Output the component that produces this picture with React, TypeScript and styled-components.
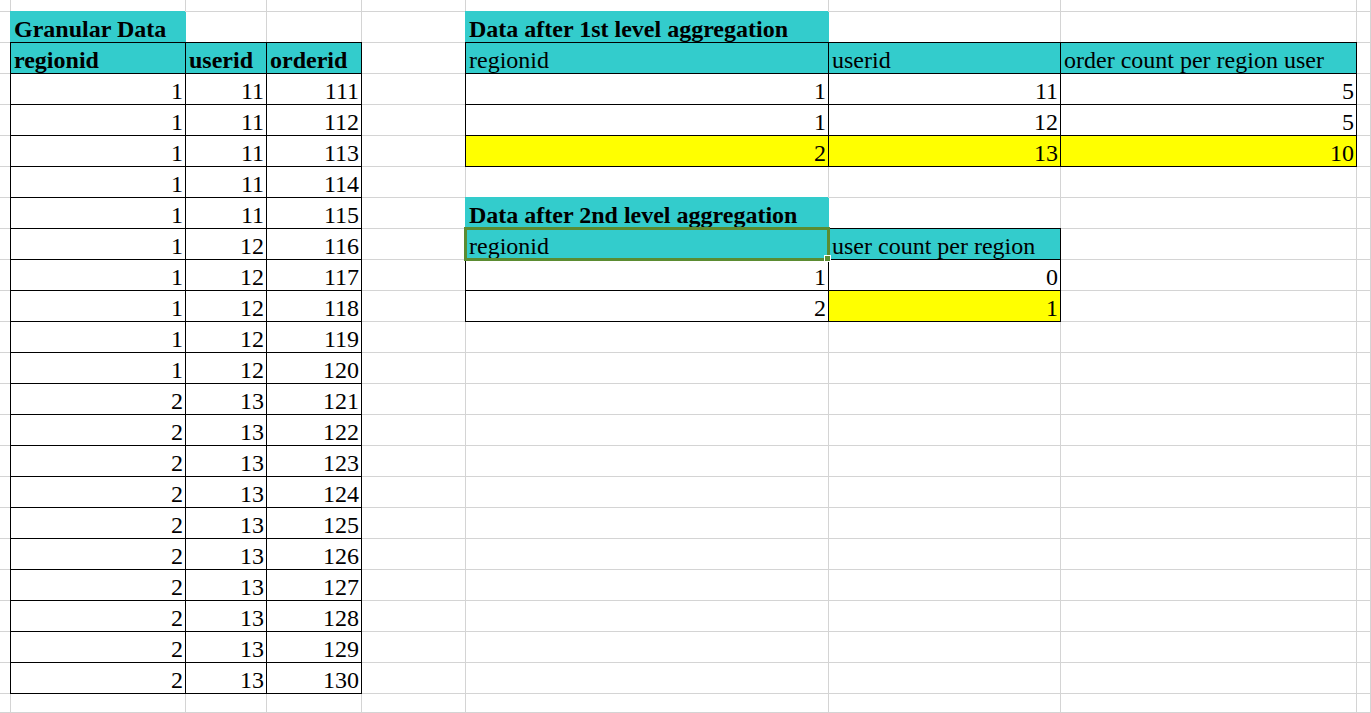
import React from "react";
import styled, { createGlobalStyle, css } from "styled-components";

const GlobalStyle = createGlobalStyle`
  html, body { margin: 0; padding: 0; background: #ffffff; }
  body { font-family: "Liberation Serif", "Times New Roman", serif; overflow: hidden; }
`;

const GRID = "#d4d4d4";
const CYAN = "#33cccc";
const YELLOW = "#ffff00";
const SELECT = "#5b8c32";

const colWidths = [11, 175, 81, 95, 104, 363, 232, 296, 14];
const rowHeights = [12, ...Array(22).fill(31), 19];

const Sheet = styled.div`
  display: grid;
  grid-template-columns: ${colWidths.map((w) => `${w}px`).join(" ")};
  grid-template-rows: ${rowHeights.map((h) => `${h}px`).join(" ")};
  width: 1371px;
  height: 713px;
  overflow: hidden;
`;

type Fill = "cyan" | "yellow" | undefined;

const Cell = styled.div<{ $fill?: Fill; $boxed?: boolean; $bold?: boolean; $num?: boolean; $selected?: boolean }>`
  box-sizing: border-box;
  position: relative;
  display: flex;
  align-items: flex-end;
  justify-content: ${(p) => (p.$num ? "flex-end" : "flex-start")};
  padding: 0 ${(p) => (p.$num ? "2px" : "3px")} 0 3px;
  border-right: 1px solid ${GRID};
  border-bottom: 1px solid ${GRID};
  font-size: 24px;
  line-height: 26px;
  font-weight: ${(p) => (p.$bold ? 700 : 400)};
  color: #000;
  white-space: nowrap;
  ${(p) =>
    p.$fill &&
    css`
      background: ${p.$fill === "cyan" ? CYAN : YELLOW};
      border-color: ${p.$fill === "cyan" ? CYAN : YELLOW};
      box-shadow: -1px -1px 0 ${p.$fill === "cyan" ? CYAN : YELLOW};
    `}
  ${(p) =>
    p.$boxed &&
    css`
      border-right-color: #000;
      border-bottom-color: #000;
      box-shadow: -1px -1px 0 #000, -1px 0 0 #000, 0 -1px 0 #000;
    `}
  ${(p) => p.$selected && css`z-index: 2;`}
`;

const Selection = styled.div`
  position: absolute;
  top: -2px;
  left: -2px;
  right: -2px;
  bottom: -2px;
  border: 3px solid ${SELECT};
  pointer-events: none;
`;

const Handle = styled.div`
  position: absolute;
  right: -4px;
  bottom: -4px;
  width: 5px;
  height: 5px;
  background: ${SELECT};
  border: 1px solid #ffffff;
`;

type CellSpec = { text?: string; fill?: Fill; boxed?: boolean; bold?: boolean; num?: boolean; selected?: boolean };

const cells: Record<string, CellSpec> = {};
const put = (r: number, c: number, spec: CellSpec) => {
  cells[`${r}-${c}`] = spec;
};

// Table 1: Granular Data
put(1, 1, { text: "Granular Data", fill: "cyan", bold: true });
["regionid", "userid", "orderid"].forEach((t, i) => put(2, 1 + i, { text: t, fill: "cyan", bold: true, boxed: true }));
for (let i = 0; i < 20; i++) {
  const region = i < 10 ? 1 : 2;
  const user = i < 5 ? 11 : i < 10 ? 12 : 13;
  const order = 111 + i;
  [region, user, order].forEach((v, j) => put(3 + i, 1 + j, { text: String(v), boxed: true, num: true }));
}

// Table 2: 1st level aggregation
put(1, 5, { text: "Data after 1st level aggregation", fill: "cyan", bold: true });
["regionid", "userid", "order count per region user"].forEach((t, i) => put(2, 5 + i, { text: t, fill: "cyan", boxed: true }));
const agg1: [number, number, number, boolean][] = [
  [1, 11, 5, false],
  [1, 12, 5, false],
  [2, 13, 10, true],
];
agg1.forEach(([a, b, c, hi], i) =>
  [a, b, c].forEach((v, j) => put(3 + i, 5 + j, { text: String(v), boxed: true, num: true, fill: hi ? "yellow" : undefined }))
);

// Table 3: 2nd level aggregation
put(7, 5, { text: "Data after 2nd level aggregation", fill: "cyan", bold: true });
put(8, 5, { text: "regionid", fill: "cyan", boxed: true, selected: true });
put(8, 6, { text: "user count per region", fill: "cyan", boxed: true });
put(9, 5, { text: "1", boxed: true, num: true });
put(9, 6, { text: "0", boxed: true, num: true });
put(10, 5, { text: "2", boxed: true, num: true });
put(10, 6, { text: "1", boxed: true, num: true, fill: "yellow" });

export default function App() {
  const out: React.ReactNode[] = [];
  for (let r = 0; r < rowHeights.length; r++) {
    for (let c = 0; c < colWidths.length; c++) {
      const s = cells[`${r}-${c}`] || {};
      out.push(
        <Cell key={`${r}-${c}`} $fill={s.fill} $boxed={s.boxed} $bold={s.bold} $num={s.num} $selected={s.selected}>
          {s.text}
          {s.selected && (
            <Selection>
              <Handle />
            </Selection>
          )}
        </Cell>
      );
    }
  }
  return (
    <>
      <GlobalStyle />
      <Sheet>{out}</Sheet>
    </>
  );
}
